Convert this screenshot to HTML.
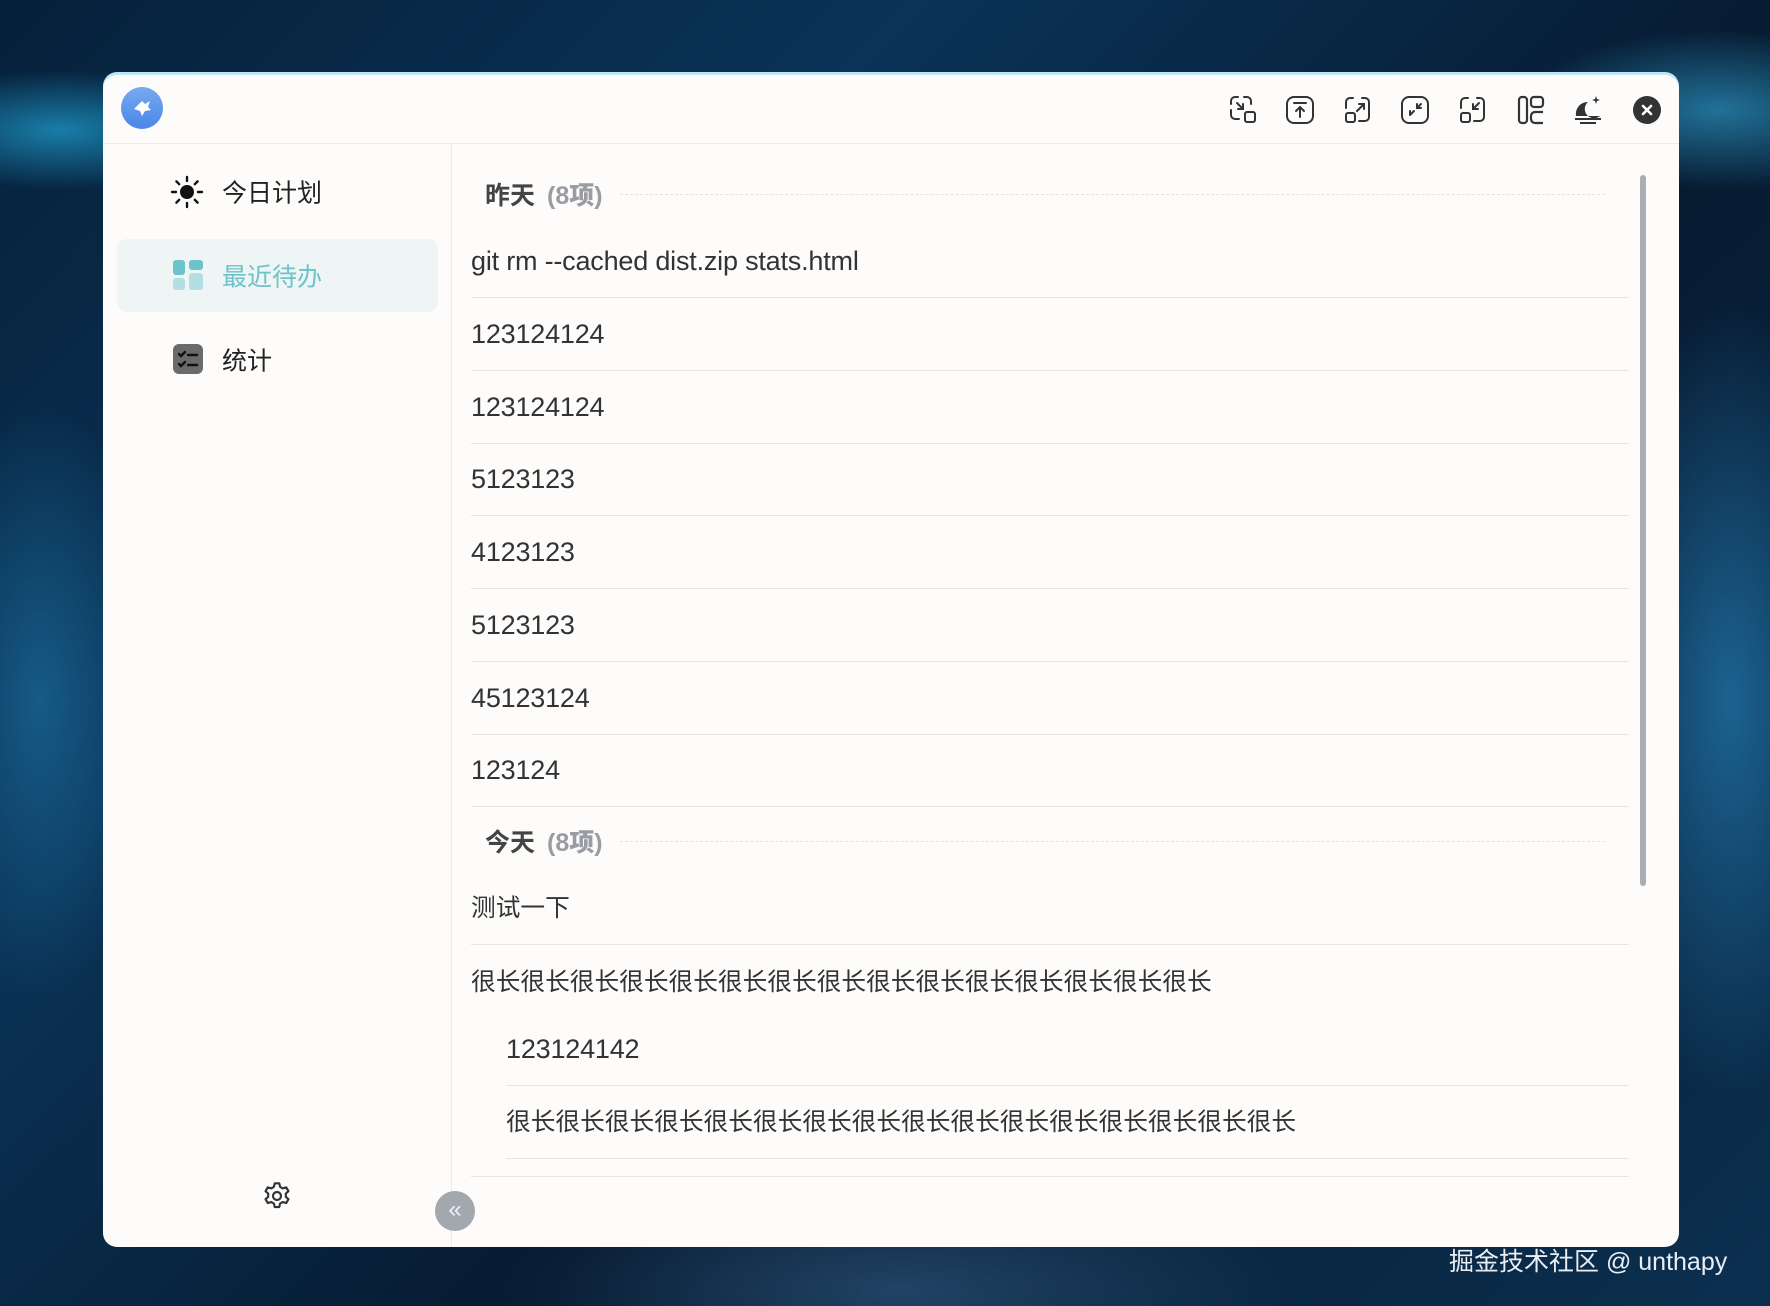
<!DOCTYPE html>
<html><head><meta charset="utf-8"><style>
*{box-sizing:border-box;margin:0;padding:0}
body{width:1770px;height:1306px;overflow:hidden;position:relative;font-family:"Liberation Sans","Noto Sans CJK SC",sans-serif;
background:
radial-gradient(ellipse 180px 60px at 60px 130px,rgba(40,200,255,.55),transparent),
radial-gradient(ellipse 200px 80px at 1720px 110px,rgba(60,200,255,.5),transparent),
radial-gradient(ellipse 120px 300px at 40px 700px,rgba(30,120,170,.6),transparent),
radial-gradient(ellipse 140px 400px at 1730px 700px,rgba(40,140,200,.6),transparent),
radial-gradient(ellipse 400px 120px at 900px 1290px,rgba(50,90,130,.6),transparent),
linear-gradient(135deg,#06203a 0%,#0a3357 30%,#071a30 60%,#0b3050 100%);}
.win{position:absolute;left:103px;top:75px;width:1576px;height:1172px;background:#fdfcfb;border-radius:14px;overflow:hidden;box-shadow:0 -3px 0 #bfe6f5}
.hdr{position:absolute;left:0;top:0;right:0;height:69px;border-bottom:1px solid #ebebeb}
.logo{position:absolute;left:18px;top:12px;width:42px;height:42px;border-radius:50%;background:linear-gradient(#78aaf0,#4a86ea)}
.ic{position:absolute;top:19px;width:32px;height:32px}
.side{position:absolute;left:0;top:69px;width:349px;bottom:0;border-right:1px solid #ececec}
.item{position:absolute;left:14px;width:321px;height:73px;border-radius:10px;font-size:25px;color:#222}
.item span{position:absolute;left:105px;top:50%;transform:translateY(-52%)}
.row{position:absolute;left:368px;right:50px;height:73px;border-bottom:1px solid #e6e6e6;font-size:27px;color:#333;letter-spacing:-.2px}
.row.c{font-size:24.7px;letter-spacing:0}
.row span{position:absolute;left:0;bottom:20px}
.grp{position:absolute;left:382px;font-size:25px;font-weight:bold;color:#444}
.grp b{color:#9a9ca3;margin-left:12px}
.grp i{position:absolute;left:135px;top:50%;width:985px;border-top:1px dashed #e3e3e3}
</style></head><body>
<div class="win">
 <div class="hdr">
  <div class="logo"><svg width="42" height="42" viewBox="0 0 42 42"><path d="M13 22l8-8 3 3 5-3-2 6 3 3-6 1-3 5-2-5z" fill="#fff"/></svg></div>
  <svg class="ic" style="left:1124px" viewBox="0 0 32 32" fill="none" stroke="#333" stroke-width="2" stroke-linecap="round"><path d="M4 10V7a4 4 0 0 1 4-4h3M17 3h3a4 4 0 0 1 4 4v3M4 16v5a4 4 0 0 0 4 4h4"/><rect x="18" y="18" width="10" height="10" rx="2"/><path d="M10 9l6 6M16 10v5h-5"/></svg>
  <svg class="ic" style="left:1181px" viewBox="0 0 32 32" fill="none" stroke="#333" stroke-width="2" stroke-linecap="round"><rect x="3" y="3" width="26" height="26" rx="7"/><path d="M10 9h12M16 23V13M12 17l4-4 4 4"/></svg>
  <svg class="ic" style="left:1239px" viewBox="0 0 32 32" fill="none" stroke="#333" stroke-width="2" stroke-linecap="round"><path d="M4 14V8a4 4 0 0 1 4-4h3M20 4h3a4 4 0 0 1 4 4v15a4 4 0 0 1-4 4h-6"/><rect x="4" y="19" width="9" height="9" rx="2"/><path d="M15 17l7-7M17 10h5v5"/></svg>
  <svg class="ic" style="left:1296px" viewBox="0 0 32 32" fill="none" stroke="#333" stroke-width="2" stroke-linecap="round"><rect x="3" y="3" width="26" height="26" rx="7"/><path d="M11 21l4-4M11 17v4M22 10l-4 4M18 10v4h4"/></svg>
  <svg class="ic" style="left:1354px" viewBox="0 0 32 32" fill="none" stroke="#333" stroke-width="2" stroke-linecap="round"><path d="M4 14V8a4 4 0 0 1 4-4h3M20 4h3a4 4 0 0 1 4 4v15a4 4 0 0 1-4 4h-6"/><rect x="4" y="19" width="9" height="9" rx="2"/><path d="M22 9l-6 6M16 10v5h5"/></svg>
  <svg class="ic" style="left:1412px" viewBox="0 0 32 32" fill="none" stroke="#333" stroke-width="2.2"><rect x="4" y="3" width="8" height="26" rx="3"/><rect x="16" y="3" width="12" height="10" rx="3"/><path d="M28 18h-8a4 4 0 0 0-4 4v3a4 4 0 0 0 4 4h8"/></svg>
  <svg class="ic" style="left:1469px" viewBox="0 0 32 32"><path d="M4 22a12 12 0 0 1 12-14 9 9 0 0 0 12 14z" fill="#333"/><path d="M3 25h26M8 29h16" stroke="#333" stroke-width="2"/><path d="M24 2l1 3 3 1-3 1-1 3-1-3-3-1 3-1z" fill="#333"/><circle cx="19" cy="12" r="1.3" fill="#fff"/></svg>
  <svg class="ic" style="left:1528px" viewBox="0 0 32 32"><circle cx="16" cy="16" r="14" fill="#333"/><path d="M12 12l8 8M20 12l-8 8" stroke="#fff" stroke-width="2.6" stroke-linecap="round"/></svg>
 </div>
 <div class="side">
  <div class="item" style="top:11px"><svg style="position:absolute;left:53px;top:20px" width="34" height="34" viewBox="0 0 34 34"><circle cx="17" cy="17" r="7" fill="#111"/><g stroke="#111" stroke-width="2.4" stroke-linecap="round"><path d="M17 2v4M17 28v4M2 17h4M28 17h4M6.4 6.4l2.8 2.8M24.8 24.8l2.8 2.8M6.4 27.6l2.8-2.8M24.8 9.2l2.8-2.8"/></g></svg><span>今日计划</span></div>
  <div class="item" style="top:95px;background:#eef5f4"><svg style="position:absolute;left:56px;top:21px" width="30" height="30" viewBox="0 0 30 30"><rect x="0" y="0" width="12" height="15" rx="3" fill="#6cc3c9"/><rect x="16" y="0" width="14" height="10" rx="3" fill="#6cc3c9"/><rect x="0" y="18" width="12" height="12" rx="3" fill="#b1dfe2"/><rect x="16" y="13" width="14" height="17" rx="3" fill="#b1dfe2"/></svg><span style="color:#6cc3c9">最近待办</span></div>
  <div class="item" style="top:179px"><svg style="position:absolute;left:56px;top:21px" width="30" height="30" viewBox="0 0 30 30"><rect width="30" height="30" rx="6" fill="#6b6b6b"/><path d="M6 10l2 2 4-4M6 20l2 2 4-4M15 11h9M15 21h9" stroke="#111" stroke-width="2.4" fill="none" stroke-linecap="round"/></svg><span>统计</span></div>
  <svg style="position:absolute;left:158px;top:1036px" width="32" height="32" viewBox="0 0 24 24" fill="none" stroke="#333" stroke-width="1.6"><circle cx="12" cy="12" r="3"/><path d="M10.3 2.5h3.4l.6 2.6 2 1.2 2.6-.8 1.7 2.9-2 1.8v2.4l2 1.8-1.7 2.9-2.6-.8-2 1.2-.6 2.6h-3.4l-.6-2.6-2-1.2-2.6.8-1.7-2.9 2-1.8v-2.4l-2-1.8 1.7-2.9 2.6.8 2-1.2z" stroke-linejoin="round"/></svg>
 </div>
 <div class="grp" style="top:101px">昨天<b>(8项)</b><i></i></div>
 <div class="row" style="top:150px"><span>git rm --cached dist.zip stats.html</span></div>
 <div class="row" style="top:223px"><span>123124124</span></div>
 <div class="row" style="top:296px"><span>123124124</span></div>
 <div class="row" style="top:368px"><span>5123123</span></div>
 <div class="row" style="top:441px"><span>4123123</span></div>
 <div class="row" style="top:514px"><span>5123123</span></div>
 <div class="row" style="top:587px"><span>45123124</span></div>
 <div class="row" style="top:659px"><span>123124</span></div>
 <div class="grp" style="top:748px">今天<b>(8项)</b><i></i></div>
 <div class="row c" style="top:797px"><span>测试一下</span></div>
 <div class="row c" style="top:870px;border:none"><span>很长很长很长很长很长很长很长很长很长很长很长很长很长很长很长</span></div>
 <div class="row" style="top:938px;left:403px"><span>123124142</span></div>
 <div class="row c" style="top:1011px;left:403px"><span>很长很长很长很长很长很长很长很长很长很长很长很长很长很长很长很长</span></div>
 <div style="position:absolute;left:368px;right:50px;top:1101px;border-top:1px solid #e6e6e6"></div>
 <div style="position:absolute;left:1537px;top:100px;width:6px;height:711px;border-radius:3px;background:#a9adb4"></div>
 <div style="position:absolute;left:332px;top:1116px;width:40px;height:40px;border-radius:50%;background:#a3a7ae;color:#eef;font-size:24px;text-align:center;line-height:38px">«</div>
</div>
<div style="position:absolute;left:1449px;top:1242px;font-size:25px;color:#e8eef4">掘金技术社区 @ unthapy</div>
</body></html>
